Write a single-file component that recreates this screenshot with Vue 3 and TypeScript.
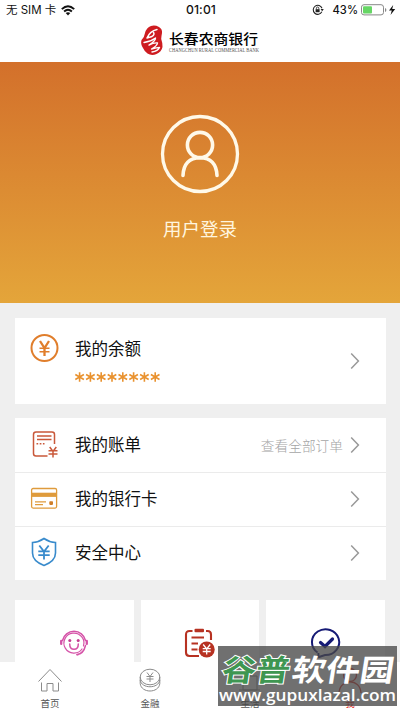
<script setup lang="ts">
interface Row {
  id: string
  label: string
  note?: string
}

const rows: Row[] = [
  { id: 'bill', label: '我的账单', note: '查看全部订单' },
  { id: 'card', label: '我的银行卡' },
  { id: 'safe', label: '安全中心' },
]
</script>

<template>
  <div class="screen">
    <div class="status">
      <div class="carrier">
        <span>无 SIM 卡</span>
        <svg width="14" height="11" viewBox="0 0 14 11" fill="none" stroke="#111" stroke-width="1.9">
          <path d="M.8 4.1Q7-1.8 13.2 4.1M3.1 6.5Q7 2.9 10.9 6.5" />
          <path d="M7 10.4 4.7 8.1Q7 6.2 9.3 8.1Z" fill="#111" stroke="none" />
        </svg>
      </div>
      <span class="clock">01:01</span>
      <div class="power">
        <svg width="12" height="12" viewBox="0 0 12 12" fill="none" stroke="#222">
          <path d="M9.8 7.8A4.5 4.5 0 1 1 10 4.3" stroke-width="1.1" />
          <path d="M8.6 5h3.2L10.2 7.2Z" fill="#222" stroke="none" />
          <rect x="3.6" y="5.2" width="4" height="3" fill="#222" stroke="none" />
          <path d="M4.4 5.4V4.2a1.2 1.2 0 0 1 2.4 0v1.2" stroke-width=".8" />
        </svg>
        <span class="percent">43%</span>
        <svg width="35" height="12" viewBox="0 0 35 12">
          <rect x=".5" y=".7" width="22" height="10.2" rx="2.5" fill="#fff" stroke="#888" />
          <rect x="2" y="2.2" width="9" height="7.2" rx="1" fill="#66d665" />
          <path d="M24 4v4q1.400-.5 1.400-2T24 4Z" fill="#888" />
          <path d="M32.2 1 28 6.600h2.800L29.500 11l4.700-6h-3Z" fill="#111" />
        </svg>
      </div>
    </div>

    <header class="brand">
      <svg width="120" height="32" viewBox="0 0 120 32">
        <path d="M11 1Q15-.2 19 2q3.500 2 3 6-.6 3-.8 6 1.500 4 1.300 8-1 5-6 7-5 2-9-.5-3-2-4.500-5.500Q.3 19 1.500 15 4.500 12 5 8 6.500 2.500 11 1Z" fill="#ce1c20" />
        <g fill="none" stroke="#fff" stroke-linecap="round" stroke-linejoin="round">
          <path d="M17 4.500Q10 6 7 13L12 11.500Q15 9.500 13.500 7.500" stroke-width="1.500" />
          <path d="M4 17.500Q11 16.500 15.500 13 16 15.500 9 20 14 17.500 17.500 18 17 21 11.500 24 17 22.500 19.500 22.500 18 26 12 27" stroke-width="1.400" />
        </g>
        <text class="brand-cn" x="29" y="18.500" textLength="89" lengthAdjust="spacingAndGlyphs">长春农商银行</text>
        <text class="brand-en" x="29" y="27" textLength="90" lengthAdjust="spacingAndGlyphs">CHANGCHUN RURAL COMMERCIAL BANK</text>
      </svg>
    </header>

    <section class="hero">
      <svg width="80" height="80" viewBox="0 0 80 80" fill="none" stroke="#fff9e9" stroke-linecap="round">
        <circle cx="40" cy="40" r="37.500" stroke-width="3.300" />
        <circle cx="40" cy="31" r="12.600" stroke-width="3.600" />
        <path d="M23 61.500C23.500 50 29.500 43.800 40 43.800S56.500 50 57 61.500" stroke-width="3.600" />
      </svg>
      <span class="login">用户登录</span>
    </section>

    <main class="content">
      <section class="balance">
        <svg class="coin" width="30" height="30" viewBox="0 0 30 30" fill="none" stroke="#e07e2c">
          <circle cx="14.500" cy="15" r="13" stroke-width="2" />
          <path d="m10 8 4.500 7 4.500-7M14.500 14.500V23" stroke-width="2.300" />
          <path d="M9.500 15.200h10M9.500 18.700h10" stroke-width="1.600" />
        </svg>
        <div class="balance-text">
          <span class="label">我的余额</span>
          <svg class="mask" width="86" height="12" viewBox="0 0 86 12" fill="none" stroke="#e9922f" stroke-width="1.600">
            <path v-for="n in 8" :key="n" :transform="`translate(${(n - 1) * 10.8 + 4.6} 6)`" d="M0-4.700V4.700M-4.300-2.500l8.600 5M-4.300 2.500l8.600-5" />
          </svg>
        </div>
        <svg class="arrow" width="10" height="18" viewBox="0 0 10 18"><path d="m1.200 1.500 7.200 7.500-7.200 7.500" /></svg>
      </section>

      <section class="list">
        <div v-for="row in rows" :key="row.id" class="row">
          <svg v-if="row.id === 'bill'" class="row-icon" width="30" height="30" viewBox="0 0 30 30" fill="none" stroke="#c9583a" stroke-width="1.500">
            <path d="M18.500 27H7q-2.500 0-2.500-2.500V5.500Q4.500 3 7 3H23q2.500 0 2.500 2.500V15M8 7h14.500M8 10.500h14.500" />
            <path d="M7.500 14.800h8" stroke-dasharray="1.700 1.500" />
            <path d="m20.700 18 3.300 4.500 3.300-4.500M24 22v6.500M19.500 21.800h9M19.500 25h9" />
          </svg>
          <svg v-else-if="row.id === 'card'" class="row-icon" width="30" height="30" viewBox="0 0 30 30" fill="none" stroke="#df9b3c" stroke-width="1.300">
            <rect x="2.600" y="5.500" width="25" height="19.600" rx="1.500" />
            <path d="M2.500 11.800h25" stroke-width="4.200" />
            <path d="M6 18.800h11M6 21.600h8" stroke-width="1.200" />
            <rect x="20.300" y="18.200" width="3.700" height="3.700" rx=".8" fill="#cf7e29" stroke="none" />
          </svg>
          <svg v-else class="row-icon" width="30" height="30" viewBox="0 0 30 30" fill="none" stroke="#398bcc" stroke-width="1.600">
            <path d="M15 1.500Q20.500 5.300 26.500 5.500V16q0 8-11.500 12.500Q3.500 24 3.500 16V5.500Q9.500 5.300 15 1.500Z" />
            <path d="m10.300 8.500 4.700 6 4.700-6M15 14v8.500M9.300 14.300h11.400M9.300 18.200h11.400" stroke-width="1.800" />
          </svg>
          <span class="label">{{ row.label }}</span>
          <span v-if="row.note" class="note">{{ row.note }}</span>
          <svg class="arrow" width="10" height="18" viewBox="0 0 10 18"><path d="m1.200 1.500 7.200 7.500-7.200 7.500" /></svg>
        </div>
      </section>

      <section class="tiles">
        <div class="tile">
          <svg width="30" height="30" viewBox="0 0 30 30" fill="none" stroke="#d553a8" stroke-width="1.500" stroke-linecap="round">
            <path d="M3.500 12.500A11.800 11.800 0 0 1 26.500 12.500M26.500 17.500Q24.500 26 18 26.500" />
            <path d="M23 21A10 10 0 1 1 24.500 18" stroke-width="1.200" />
            <path d="M2.200 12.900v3M27.800 12.900v3" stroke-width="2.300" />
            <path d="M10.700 16q0 5.300 4.300 5.300T19.300 16M18 26.700h1" />
            <circle cx="10.800" cy="12.400" r="1.500" fill="#c43b91" stroke="none" />
            <circle cx="19.200" cy="12.400" r="1.500" fill="#c43b91" stroke="none" />
          </svg>
        </div>
        <div class="tile">
          <svg width="32" height="30" viewBox="0 0 32 30" fill="none" stroke="#b73222" stroke-width="2.100">
            <path d="M8.500 3H5.500Q2 3 2 6.500v18Q2 28 5.500 28H15M22 3h1.500Q27 3 27 6.500V12" />
            <rect x="10.500" y="0.700" width="9.500" height="3.500" rx="1" fill="#b73222" stroke="none" />
            <path d="M7.500 9.500h12.500M7.500 15.500h6.500M7.500 21.500h6" />
            <circle cx="22.700" cy="21.500" r="8" fill="#b73222" stroke="none" />
            <path d="m19.200 16.500 3.500 4.500 3.500-4.500M22.700 21v5.500M18.700 20.700h8M18.700 23.500h8" stroke="#fff" stroke-width="1.300" />
          </svg>
        </div>
        <div class="tile">
          <svg width="32" height="30" viewBox="0 0 32 30" fill="none" stroke="#151a75">
            <path d="M7.500 24.500A13.600 12.900 0 1 1 15 27L9 29Q8 28 8.500 25" stroke-width="2" />
            <path d="m10.500 14.500 4.500 4 7.500-7.500" stroke-width="3.200" stroke-linecap="round" />
          </svg>
        </div>
      </section>
    </main>

    <nav class="tabs">
      <div class="tab">
        <svg width="26" height="26" viewBox="0 0 26 26" fill="none" stroke="#8b8b8b" stroke-width="1">
          <path d="M1.500 14.500 13 2.500l11.500 12M4.500 15.500V24H10v-7.500h6V24h5.500v-8.500" />
        </svg>
        <span>首页</span>
      </div>
      <div class="tab">
        <svg width="26" height="26" viewBox="0 0 26 26" fill="none" stroke="#8b8b8b" stroke-width="1">
          <ellipse cx="13" cy="10" rx="9.800" ry="7.800" />
          <path d="M3.200 10v6.500c1 10 18.600 10 19.600 0V10M3.200 13c1 9 18.600 9 19.600 0" />
          <path d="m10 5.500 3 4 3-4M13 9.500V15M9.500 9.500h7M9.500 12h7" />
        </svg>
        <span>金融</span>
      </div>
      <div class="tab">
        <svg width="26" height="26" viewBox="0 0 26 26" fill="none" stroke="#8b8b8b">
          <path d="M6 9h14v14H6zM2 23h21" />
        </svg>
        <span>生活</span>
      </div>
      <div class="tab active">
        <svg width="26" height="26" viewBox="0 0 26 26" fill="none" stroke="#e0342c" stroke-width="1.300">
          <circle cx="13" cy="8" r="6.500" />
          <path d="M2 26c1-15 21-15 22 0" />
        </svg>
        <span>我</span>
      </div>
    </nav>

    <div class="overlay">
      <svg width="179" height="60" viewBox="0 0 179 60">
        <g class="site-name" transform="translate(6 0) skewX(-9)">
          <text class="green" x="2" y="35" textLength="68" lengthAdjust="spacingAndGlyphs">谷普</text>
          <text x="72" y="35" textLength="102" lengthAdjust="spacingAndGlyphs">软件园</text>
        </g>
        <text class="site-url" x="1" y="54.500" textLength="177" lengthAdjust="spacingAndGlyphs">www.gupuxlazal.com</text>
      </svg>
    </div>
  </div>
</template>

<style>
body {
  margin: 0;
}
</style>

<style scoped>
.screen {
  position: relative;
  display: flex;
  flex-direction: column;
  width: 400px;
  height: 710px;
  overflow: hidden;
  background: #efefef;
  font-family: "Liberation Sans", "Noto Sans CJK SC", sans-serif;
  color: #111;
}
svg {
  display: block;
  flex: none;
  overflow: visible;
}
.status {
  display: grid;
  grid-template-columns: 1fr auto 1fr;
  align-items: center;
  height: 20px;
  padding: 0 4px 0 6px;
  background: #fff;
  font-family: Inter, "Noto Sans CJK SC", sans-serif;
  font-size: 12.5px;
  line-height: 20px;
}
.carrier,
.power {
  display: flex;
  align-items: center;
}
.carrier {
  gap: 5px;
  font-size: 11.5px;
  white-space: nowrap;
}
.clock {
  font-size: 12.2px;
  font-weight: 500;
  letter-spacing: .1px;
}
.power {
  justify-content: flex-end;
}
.percent {
  margin: 0 3px 0 9px;
  font-size: 11.2px;
  font-weight: 500;
}
.brand {
  display: flex;
  justify-content: center;
  height: 42px;
  padding-top: 5px;
  box-sizing: border-box;
  background: #fff;
}
.brand-cn {
  font: 500 14px "Noto Sans CJK SC", sans-serif;
}
.brand-en {
  font: 5.2px "Liberation Serif", serif;
  fill: #555;
}
.hero {
  display: flex;
  flex-direction: column;
  align-items: center;
  height: 241px;
  padding-top: 52px;
  box-sizing: border-box;
  background: linear-gradient(#d3702b, #e4a53a);
}
.login {
  margin-top: 21px;
  color: #fff5df;
  font-size: 18.5px;
  line-height: 30px;
}
.content {
  display: flex;
  flex-direction: column;
  flex: 1;
  min-height: 0;
  padding: 15px 14px 0 15px;
  overflow: hidden;
}
.balance {
  display: flex;
  flex: none;
  align-items: center;
  height: 86px;
  padding: 0 26px 0 15px;
  box-sizing: border-box;
  background: #fff;
}
.coin {
  align-self: flex-start;
  margin-top: 15px;
}
.balance-text {
  flex: 1;
  align-self: flex-start;
  padding: 19px 0 0 15px;
}
.label {
  display: block;
  font-size: 16.5px;
  line-height: 24px;
}
.mask {
  margin-top: 10px;
}
.arrow {
  fill: none;
  stroke: #999;
  stroke-width: 1.5;
}
.list {
  flex: none;
  margin-top: 14px;
  background: #fff;
}
.row {
  display: flex;
  align-items: center;
  height: 54px;
  padding: 0 26px 0 14px;
  box-sizing: border-box;
}
.row + .row {
  padding-bottom: 1px;
  border-top: 1px solid #ebebeb;
}
.row .label {
  flex: 1;
  margin-left: 16px;
}
.row-icon {
  margin-top: -2px;
}
.note {
  margin-right: 7px;
  color: #a5a5a5;
  font-family: "Noto Sans CJK SC", sans-serif;
  font-size: 13.7px;
  font-weight: 300;
  line-height: 20px;
}
.tiles {
  display: grid;
  grid-template-columns: repeat(3, 1fr);
  flex: none;
  gap: 7px;
  height: 90px;
  margin-top: 20px;
  padding-right: 1px;
}
.tile {
  display: flex;
  justify-content: center;
  padding-top: 28px;
  background: #fff;
}
.tabs {
  display: grid;
  grid-template-columns: repeat(4, 1fr);
  flex: none;
  height: 48px;
  background: #fff;
}
.tab {
  display: flex;
  flex-direction: column;
  align-items: center;
  padding-top: 5px;
  color: #555;
  font-size: 9.5px;
  line-height: 15px;
}
.tab span {
  margin-top: 3px;
}
.active {
  color: #d22;
}
.overlay {
  position: absolute;
  right: 3px;
  bottom: 4px;
  background: rgba(72, 72, 72, .78);
}
.site-name text {
  fill: #fff;
  font: 700 30px "Noto Sans CJK SC", sans-serif;
}
.site-name .green {
  fill: #3e9651;
  stroke: #fff;
  stroke-width: 2px;
  paint-order: stroke;
}
.site-url {
  fill: #fff;
  font: 600 17px "Open Sans", sans-serif;
}
</style>
